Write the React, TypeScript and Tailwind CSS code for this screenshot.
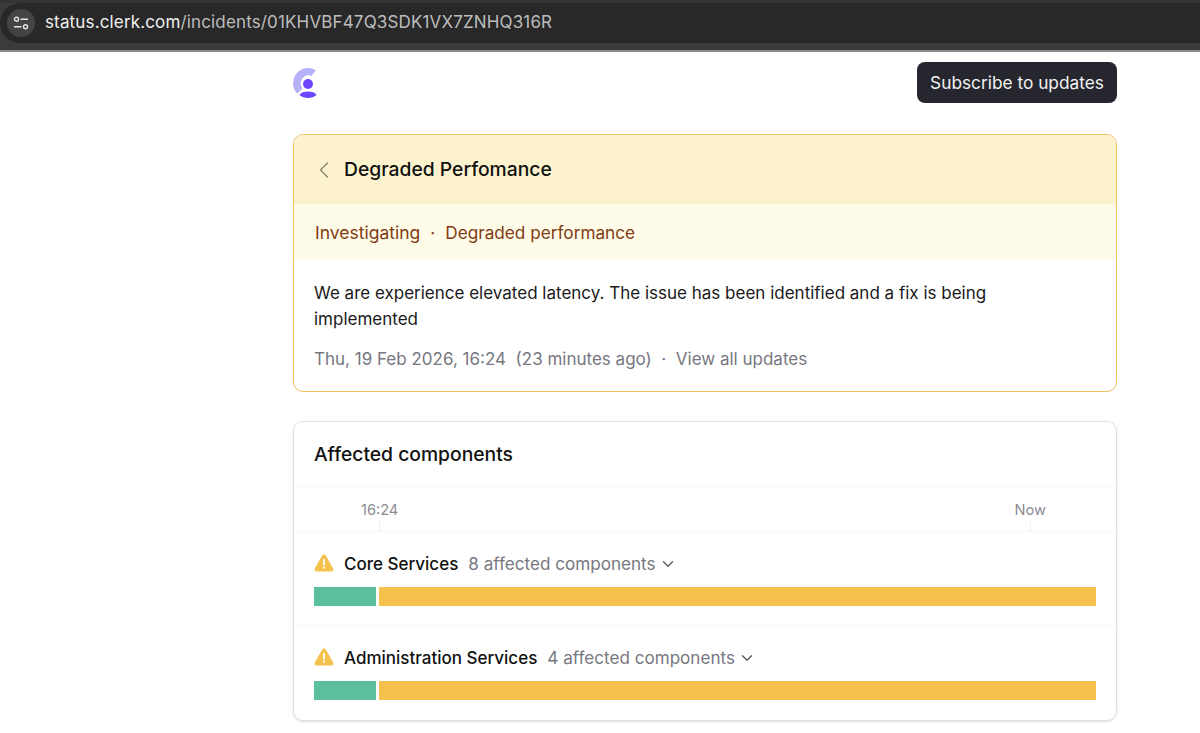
import { ChevronDown, ChevronLeft } from 'lucide-react'

const services = [
  { name: 'Core Services', affected: '8 affected components' },
  { name: 'Administration Services', affected: '4 affected components' },
]

function Logo() {
  return (
    <svg width="30" height="30" viewBox="0 0 30 30" fill="none">
      <path d="M22.8 2.2A15 15 0 0 0 4.4 25.6L9.6 20.6A8 8 0 0 1 18.6 8Z" fill="#b7b0fb" />
      <circle cx="15" cy="16" r="5" fill="#6c47ff" />
      <path d="M6.5 27C8 24.4 11 23.6 15 23.6S22 24.4 23.5 27C21.5 29 18.5 30 15 30S8.5 29 6.5 27Z" fill="#6c47ff" />
    </svg>
  )
}

function WarningIcon() {
  return (
    <svg width="20" height="18" viewBox="0 0 20 18" className="shrink-0 -mt-[2px]">
      <path d="M8.2 1.6C9 0.2 11 0.2 11.8 1.6L19.2 14.4C20 15.8 19 17.5 17.4 17.5H2.6C1 17.5 0 15.8 0.8 14.4Z" fill="#f4c14c" />
      <rect x="9.1" y="4.8" width="1.8" height="6.6" rx="0.9" fill="#fff" />
      <circle cx="10" cy="13.7" r="1.1" fill="#fff" />
    </svg>
  )
}

export default function App() {
  return (
    <div className="h-[733px] overflow-hidden bg-white font-['Inter',sans-serif]">
      {/* Browser bar */}
      <div className="h-[52px] bg-[#3b3b3b] border-t-[3px] border-b-2 border-t-[#333333] border-b-[#8a8a8a]">
        <div className="h-[40px] bg-[#282828] rounded-l-[20px] flex items-center pl-[7px]">
          <div className="w-[28px] h-[28px] rounded-full bg-[#444444] flex items-center justify-center">
            <svg width="16" height="14" viewBox="0 0 16 14" fill="none" stroke="#e4e4e4" strokeWidth="1.4">
              <circle cx="3.5" cy="3.2" r="2" />
              <path d="M7.5 3.2H15M1 10.8H8.5" />
              <circle cx="12.5" cy="10.8" r="2" />
            </svg>
          </div>
          <span className="ml-[10px] text-[17px] text-[#bdbdbd] tracking-[0.15px]">
            <span className="text-[#f0f0f0]">status.clerk.com</span>/incidents/01KHVBF47Q3SDK1VX7ZNHQ316R
          </span>
        </div>
      </div>

      <div className="w-[824px] ml-[293px]">
        <div className="flex items-center justify-between pt-[10px]">
          <Logo />
          <button className="w-[200px] h-[41px] pt-[1px] bg-[#26262e] text-[#f2f2f2] rounded-[8px] text-[17.3px]">
            Subscribe to updates
          </button>
        </div>

        {/* Incident card */}
        <div className="mt-[31px] h-[258px] border-[1.5px] border-[#efc262] rounded-[10px] overflow-hidden">
          <div className="h-[69px] bg-[#fcf3ce] flex items-center pl-[16px]">
            <ChevronLeft size={28} strokeWidth={1.2} className="text-[#8a8670]" />
            <h1 className="ml-[6px] text-[19.3px] font-medium text-[#111111]">Degraded Perfomance</h1>
          </div>
          <div className="h-[56px] pt-[1px] bg-[#fffbe9] flex items-baseline pl-[21px] text-[17.2px] leading-[56px] text-[#7f3b12]">
            <span className="text-[17.5px]">Investigating</span>
            <span className="mx-[10px]">·</span>
            <span>Degraded performance</span>
          </div>
          <div className="px-[20px] pt-[20px] text-[17px]">
            <p className="text-[#1a1a1a] leading-[26px] max-w-[720px]">
              We are experience elevated latency. The issue has been identified and a fix is being implemented
            </p>
            <p className="mt-[14px] text-[#77777f] leading-[26px]">
              Thu, 19 Feb 2026, 16:24&nbsp; (23 minutes ago)&nbsp; ·&nbsp; View all updates
            </p>
          </div>
        </div>

        {/* Affected components */}
        <div className="mt-[29px] h-[300px] border border-[#e0e0e3] rounded-[10px] overflow-hidden shadow-sm">
          <div className="h-[65px] flex items-center pl-[20px] border-b border-[#f6f6f7]">
            <h2 className="text-[19.3px] font-medium text-[#111111]">Affected components</h2>
          </div>
          <div className="h-[45px] flex justify-between pl-[67px] pr-[70px] pt-[12px] border-b border-[#f6f6f7] text-[14.6px] text-[#8b8b92]">
            <div className="flex flex-col items-center">
              <span className="leading-[22px]">16:24</span>
              <div className="w-px h-[10px] bg-[#f0f0f2]" />
            </div>
            <div className="flex flex-col items-center">
              <span className="leading-[22px]">Now</span>
              <div className="w-px h-[10px] bg-[#f0f0f2]" />
            </div>
          </div>
          {services.map((s, i) => (
            <div
              key={s.name}
              className={`h-[94px] px-[20px] pt-[21px] ${i === 0 ? 'border-b border-[#f6f6f7]' : ''}`}
            >
              <div className="flex items-center h-[22px] text-[17px]">
                <WarningIcon />
                <div className="flex items-baseline">
                  <span className="ml-[10px] font-medium text-[#111111]">{s.name}</span>
                  <span className="ml-[10px] text-[17.1px] text-[#77777f]">{s.affected}</span>
                </div>
                <ChevronDown size={18} strokeWidth={1.7} className="ml-[3px] text-[#55555c]" />
              </div>
              <div className="flex gap-[3.5px] mt-[11.5px] h-[19.5px]">
                <div className="w-[61.5px] bg-[#5bbf9b]" />
                <div className="flex-1 bg-[#f4c14c]" />
              </div>
            </div>
          ))}
        </div>
      </div>
    </div>
  )
}
